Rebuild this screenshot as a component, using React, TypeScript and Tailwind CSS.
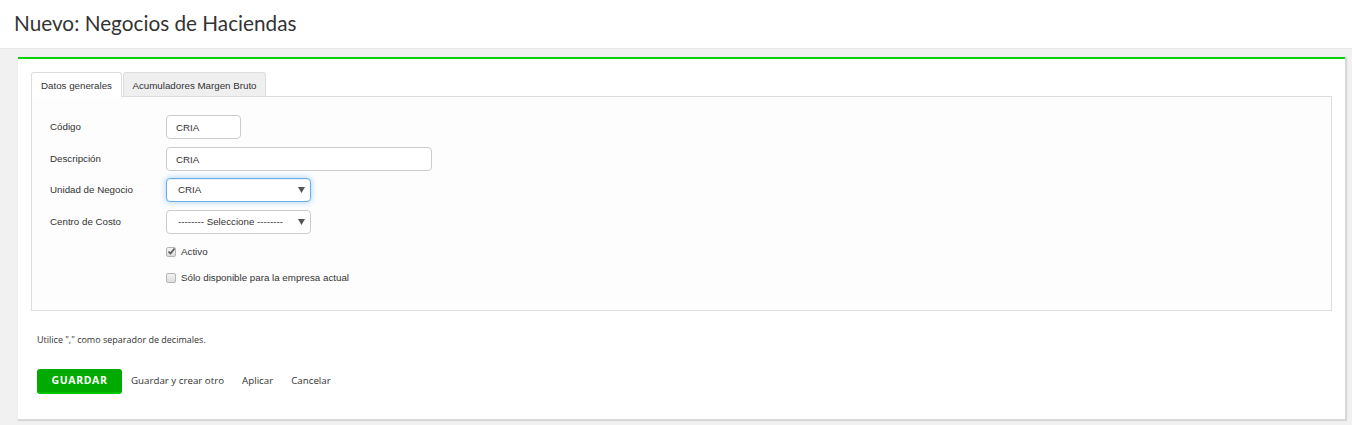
import React from 'react';

const labelFont = "font-['Liberation_Sans',Arial,sans-serif]";

function Field({ label, children }: { label: string; children: React.ReactNode }) {
  return (
    <div className="flex items-start h-[24px] mb-[8px]">
      <label className={`w-[116px] pt-[5px] text-[9.75px] leading-[13px] text-[#333] ${labelFont}`}>{label}</label>
      {children}
    </div>
  );
}

function Select({ value, focused }: { value: string; focused?: boolean }) {
  return (
    <div className="relative flex">
      <select
        defaultValue={value}
        className={`block appearance-none h-[24px] w-[145px] rounded-[4px] bg-white pl-[11px] text-[9.75px] text-[#333] outline-none ${labelFont} ${
          focused
            ? 'border border-[#66afe9] shadow-[inset_0_1px_1px_rgba(0,0,0,0.075),0_0_6px_rgba(102,175,233,0.6)]'
            : 'border border-[#ccc]'
        }`}
      >
        <option>{value}</option>
      </select>
      <svg className="absolute right-[6px] top-[9px] pointer-events-none" width="7" height="6" viewBox="0 0 7 6">
        <path d="M0 0h7L3.5 6z" fill="#555" />
      </svg>
    </div>
  );
}

function Check({ checked, label }: { checked?: boolean; label: string }) {
  return (
    <div className="flex items-center gap-[5px] h-[13px]">
      <span className="relative w-[10px] h-[10px] rounded-[2px] border border-[#b5b5b5] bg-gradient-to-b from-[#f4f4f4] to-[#dcdcdc]">
        {checked && (
          <svg className="absolute left-[0px] top-[-1px]" width="9" height="9" viewBox="0 0 9 9">
            <path d="M1.5 4.5l2 2 4-5" stroke="#555" strokeWidth="1.6" fill="none" />
          </svg>
        )}
      </span>
      <span className={`text-[9.75px] leading-[13px] text-[#333] ${labelFont}`}>{label}</span>
    </div>
  );
}

export default function App() {
  return (
    <div className="h-[425px] bg-[#f1f1f1] overflow-hidden">
      <div className="h-[49px] bg-white border-b border-[#e6e6e6] px-[14px] pt-[10px]">
        <h1 className="text-[20.75px] leading-[26px] text-[#333] font-['Lato',sans-serif]">Nuevo: Negocios de Haciendas</h1>
      </div>

      <div className="ml-[18px] mr-[7px] mt-[8px] h-[362px] bg-white border-t-2 border-[#0ad20a] shadow-[1px_1px_1px_1px_rgba(0,0,0,0.1)]">
        <div className="px-[13px] pt-[13px]">
          <div className={`flex text-[9.75px] leading-[13px] text-[#333] ${labelFont}`}>
            <div className="relative z-10 -mb-px h-[25px] w-[91px] text-center pt-[6px] border border-b-0 border-[#ddd] rounded-t-[3px] bg-white">Datos generales</div>
            <div className="ml-px h-[24px] w-[143px] text-center pt-[6px] border border-b-0 border-[#ddd] rounded-t-[3px] bg-[#efefef]">Acumuladores Margen Bruto</div>
          </div>
          <div className="h-[215px] border border-[#ddd] bg-[#fdfdfd] px-[18px] pt-[18px]">
            <Field label="Código">
              <input
                defaultValue="CRIA"
                className={`block h-[24px] w-[75px] rounded-[4px] border border-[#ccc] bg-white px-[9px] text-[9.75px] text-[#333] outline-none ${labelFont}`}
              />
            </Field>
            <Field label="Descripción">
              <input
                defaultValue="CRIA"
                className={`block h-[24px] w-[266px] rounded-[4px] border border-[#ccc] bg-white px-[9px] text-[9.75px] text-[#333] outline-none ${labelFont}`}
              />
            </Field>
            <div className="-mt-px">
              <Field label="Unidad de Negocio">
                <Select value="CRIA" focused />
              </Field>
            </div>
            <Field label="Centro de Costo">
              <Select value="-------- Seleccione --------" />
            </Field>
            <div className="ml-[116px] pt-[3px] flex flex-col gap-[13px]">
              <Check checked label="Activo" />
              <Check label="Sólo disponible para la empresa actual" />
            </div>
          </div>
        </div>

        <div className="px-[19px] pt-[22px]">
          <p className="text-[9px] leading-[13px] text-[#333] font-['Open_Sans',sans-serif]">Utilice "," como separador de decimales.</p>
          <div className="mt-[23px] flex items-center font-['Open_Sans',sans-serif] text-[9.75px] text-[#333]">
            <button className="h-[25px] w-[85px] rounded-[3px] bg-[#00aa00] border-b-2 border-[#00c400] text-white font-bold tracking-[0.6px] text-[10.5px]">
              GUARDAR
            </button>
            <span className="ml-[9px]">Guardar y crear otro</span>
            <span className="ml-[18px]">Aplicar</span>
            <span className="ml-[18px]">Cancelar</span>
          </div>
        </div>
      </div>
    </div>
  );
}
